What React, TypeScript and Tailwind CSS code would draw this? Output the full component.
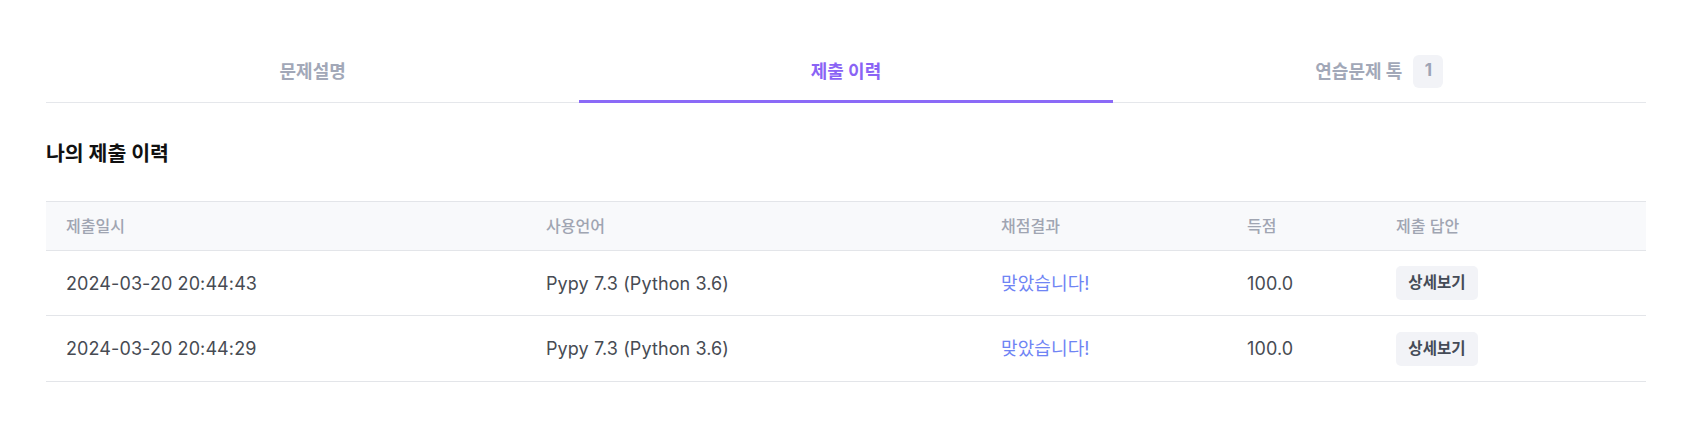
import { useState } from "react"

const tabs = [
  { label: "문제설명" },
  { label: "제출 이력" },
  { label: "연습문제 톡", count: 1 },
]

const submissions = [
  { date: "2024-03-20 20:44:43", lang: "Pypy 7.3 (Python 3.6)", result: "맞았습니다!", score: "100.0" },
  { date: "2024-03-20 20:44:29", lang: "Pypy 7.3 (Python 3.6)", result: "맞았습니다!", score: "100.0" },
]

const cols = "grid grid-cols-[480px_455px_246px_149px_270px]"

export default function App() {
  const [active, setActive] = useState(1)

  return (
    <div className="min-h-screen bg-white pt-[40px] font-['Inter','Noto_Sans_CJK_KR',sans-serif]">
      <div className="ml-[46px] w-[1600px]">
        {/* Tabs */}
        <div className="grid grid-cols-3 border-b border-[#e5e7eb]">
          {tabs.map((tab, i) => (
            <button
              key={tab.label}
              onClick={() => setActive(i)}
              className={`relative flex h-[62px] items-center justify-center gap-[11px] text-[18px] font-bold ${
                i === active ? "text-[#8a63f5]" : "text-[#a2a8b8]"
              }`}
            >
              {tab.label}
              {tab.count !== undefined && (
                <span className="flex h-[33px] w-[30px] items-center justify-center rounded-md bg-[#f2f3f7] text-[17px] text-[#9ea4b5]">
                  {tab.count}
                </span>
              )}
              {i === active && (
                <span className="absolute bottom-[-1px] left-0 h-[3px] w-full bg-[#8b6af7]" />
              )}
            </button>
          ))}
        </div>

        {/* Heading */}
        <h2 className="mt-[37px] text-[20.5px] leading-[27px] font-bold text-[#111]">나의 제출 이력</h2>

        {/* Table */}
        <div className="mt-[34px] border-t border-[#e3e5e9]">
          <div className={`${cols} h-[49px] items-center border-b border-[#e3e5e9] bg-[#f8f9fb] text-[16px] font-medium text-[#a0a5b2]`}>
            <div className="px-5">제출일시</div>
            <div className="px-5">사용언어</div>
            <div className="px-5">채점결과</div>
            <div className="px-5">득점</div>
            <div className="px-5">제출 답안</div>
          </div>
          {submissions.map((s, i) => (
            <div
              key={s.date}
              className={`${cols} ${
                i === submissions.length - 1 ? "h-[66px]" : "h-[65px]"
              } items-center border-b border-[#e3e5e9] text-[18px] tracking-[0.1px] text-[#474b53]`}
            >
              <div className="px-5">{s.date}</div>
              <div className="px-5">{s.lang}</div>
              <div className="px-5 text-[#6f84f4]">{s.result}</div>
              <div className="px-5">{s.score}</div>
              <div className="px-5">
                <button className="flex h-[34px] w-[82px] items-center justify-center rounded-[5px] bg-[#f2f3f7] text-[15.5px] font-semibold text-[#454b57]">
                  상세보기
                </button>
              </div>
            </div>
          ))}
        </div>
      </div>
    </div>
  )
}
